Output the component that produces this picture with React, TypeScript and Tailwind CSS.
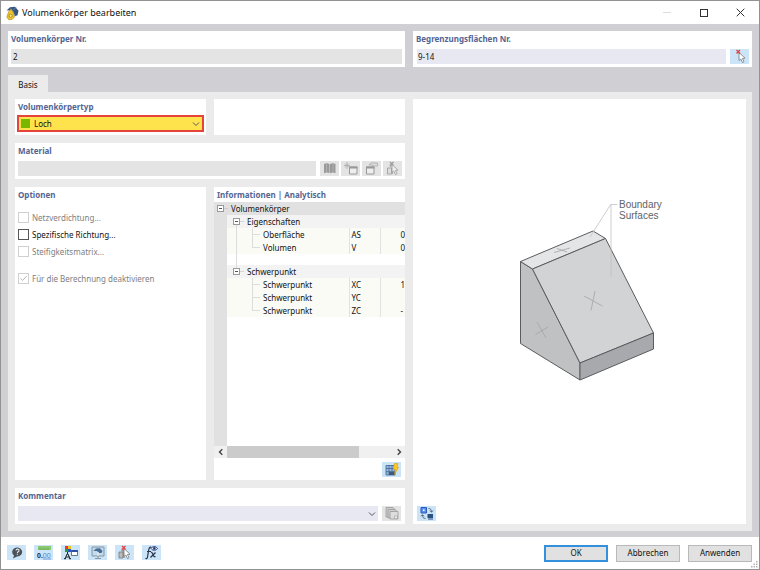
import { useState } from 'react';
import type { ReactNode } from 'react';

type PanelProps = { title?: string; htmlFor?: string; className?: string; children?: ReactNode };

const Panel = ({ title, htmlFor, className = '', children }: PanelProps) => (
    <section className={`bg-white min-w-0 min-h-[36px] flex flex-col ${className}`}>
        {title && (
            <h2 className="px-[3px] leading-[15px] mb-[3px] font-bold text-[#536592]">
                {htmlFor ? <label htmlFor={htmlFor}>{title}</label> : title}
            </h2>
        )}
        {children}
    </section>
);

type IconButtonProps = { label: string; disabled?: boolean; children: ReactNode };

const IconButton = ({ label, disabled, children }: IconButtonProps) => (
    <button
        type="button"
        aria-label={label}
        disabled={disabled}
        className="w-[19px] h-[15px] shrink-0 flex items-center justify-center bg-[#cce4f7] disabled:bg-[#e4e4e4]"
    >
        <svg viewBox="0 0 18 15" className="w-[18px] h-[15px]" fill="none">{children}</svg>
    </button>
);

const Chevron = () => (
    <svg viewBox="0 0 8 8" className="w-2 h-2 absolute right-0.5 top-1/2 -translate-y-1/2 pointer-events-none" fill="none" stroke="#55565f">
        <path d="m1 2.500 3 3 3-3" />
    </svg>
);

const Cursor = ({ fill = '#fff', stroke = '#777' }) => (
    <path d="M8 3.500v8l1.800-1.500 1.700 3.500 1.500-.8-1.600-3.200 2.600-.3z" fill={fill} stroke={stroke} strokeWidth=".8" />
);

type OptionProps = { label: string; disabled?: boolean; defaultChecked?: boolean };

const Option = ({ label, disabled, defaultChecked }: OptionProps) => (
    <label className={`flex items-center gap-[3px] h-[17px] ${disabled ? 'text-[#808080]' : 'text-[#111]'}`}>
        <span className="relative flex">
            <input
                type="checkbox"
                disabled={disabled}
                defaultChecked={defaultChecked}
                className="peer appearance-none w-[11px] h-[11px] bg-white border border-[#555] disabled:border-[#d0d0d0]"
            />
            <svg viewBox="0 0 11 11" className="absolute inset-0 hidden peer-checked:block pointer-events-none" fill="none" stroke="#b5b5b5">
                <path d="m2.500 5.500 2 2 4.200-4.500" />
            </svg>
        </span>
        {label}
    </label>
);

const Expander = () => (
    <button type="button" aria-label="Zuklappen" className="w-[7px] h-[7px] shrink-0 flex items-center justify-center bg-white border border-[#9a9a9a]">
        <span className="w-[3px] h-px bg-[#555]" />
    </button>
);

const Group = ({ name, more }: { name: string; more?: boolean }) => (
    <tr className="h-[13px] bg-[#f3f3f3]">
        <td className="bg-[#e1e1e1]" />
        <td colSpan={3} className="relative">
            {more && <span className="absolute left-[9px] top-2 h-[52px] w-px bg-[#ddd]" />}
            <span className="relative flex items-center pl-1.5 leading-3">
                <Expander />
                <span className="w-1 h-px bg-[#d5d5d5] mr-[3px]" />
                {name}
            </span>
        </td>
    </tr>
);

type ItemProps = { name: string; symbol: string; value: string; last?: boolean; more?: boolean };

const Item = ({ name, symbol, value, last, more }: ItemProps) => (
    <tr className="h-[13px] bg-[#fafbf5]">
        <td className="bg-[#e1e1e1]" />
        <td className="relative pl-9 border-r border-[#e2e2e2]">
            {more && <span className="absolute left-[9px] inset-y-0 w-px bg-[#ddd]" />}
            <span className={`absolute left-[25px] top-0 w-px bg-[#ddd] ${last ? 'h-[7px]' : 'h-full'}`} />
            <span className="absolute left-[25px] top-1.5 w-2 h-px bg-[#ddd]" />
            {name}
        </td>
        <td className="pl-0.5 border-r border-[#e2e2e2]">{symbol}</td>
        <td className="pl-5">{value}</td>
    </tr>
);

const InfoTable = () => (
    <div className="overflow-hidden flex-1 flex flex-col bg-[linear-gradient(to_right,#e1e1e1_13px,#fff_13px)]">
        <table className="w-[260px] table-fixed border-collapse leading-3 text-[#111]">
            <colgroup>
                <col className="w-[13px]" />
                <col className="w-[122px]" />
                <col className="w-[31px]" />
                <col />
            </colgroup>
            <tbody>
                <tr className="h-[13px] bg-[#e1e1e1]">
                    <td colSpan={4}>
                        <span className="flex items-center pl-[3px] leading-3">
                            <Expander />
                            <span className="w-1 h-px bg-[#ccc] mr-[3px]" />
                            Volumenkörper
                        </span>
                    </td>
                </tr>
                <Group name="Eigenschaften" more />
                <Item name="Oberfläche" symbol="AS" value="0" more />
                <Item name="Volumen" symbol="V" value="0" last more />
                <tr className="h-[11px]">
                    <td className="bg-[#e1e1e1]" />
                    <td colSpan={3} className="relative bg-white">
                        <span className="absolute left-[9px] inset-y-0 w-px bg-[#ddd]" />
                    </td>
                </tr>
                <Group name="Schwerpunkt" />
                <Item name="Schwerpunkt" symbol="XC" value="1" />
                <Item name="Schwerpunkt" symbol="YC" value="" />
                <Item name="Schwerpunkt" symbol="ZC" value="-" last />
            </tbody>
        </table>
    </div>
);

const ScrollBar = () => (
    <div className="flex h-3 bg-[#f0f0f0]">
        <button type="button" aria-label="Nach links" className="w-[13px] flex items-center justify-center">
            <svg viewBox="0 0 8 8" className="w-2 h-2" fill="none" stroke="#444" strokeWidth="1.4"><path d="M5.300 1.200 2.500 4l2.800 2.800" /></svg>
        </button>
        <div className="flex-1"><div className="w-4/5 h-full bg-[#cbcbcb]" /></div>
        <button type="button" aria-label="Nach rechts" className="w-[13px] flex items-center justify-center">
            <svg viewBox="0 0 8 8" className="w-2 h-2" fill="none" stroke="#444" strokeWidth="1.4"><path d="M2.700 1.200 5.500 4 2.700 6.800" /></svg>
        </button>
    </div>
);

const Preview = () => (
    <svg viewBox="-20 0 200 200" className="w-[200px] h-[200px]" strokeLinejoin="round" fill="none">
        <g stroke="#5b5c5f">
            <path d="m20.500 70.500 12 7.500L80 172v17l-59.500-36.500z" fill="#c0c1c3" />
            <path d="M20.500 70.500 93 40l12.500 7.500L32.500 78z" fill="#e3e5e7" />
            <path d="m32.500 78 73-30.500L153.500 142 80 172z" fill="#d2d3d5" />
            <path d="m80 172 73.500-30v16L80 189z" fill="#a8a9ad" />
        </g>
        <g stroke="#a3a4a6" strokeWidth=".8">
            <path d="m84 105 18.500 10M95 100l-4 19.500M37 131l9 16M35.500 143.500 48 136M54 61.500l16-4.500M57 57.500l10 3.500" />
        </g>
        <path d="M117.500 13.500h-6.800L90 46M111 13.500V86" stroke="#c2c2c2" strokeWidth=".8" />
        <g fill="#626366" fontSize="10" fontFamily="Liberation Sans, Arial, sans-serif">
            <text x="119" y="17">Boundary</text>
            <text x="119" y="28">Surfaces</text>
        </g>
    </svg>
);

const TitleBar = () => (
    <header className="flex items-center h-[23px] pl-[5px] bg-white">
        <svg viewBox="0 0 13 14" className="w-[13px] h-[14px] mr-[3px]">
            <path d="M.5 4.500 4 1.200 9 .8l3.500 4-1 4.500-2.500 1-2-5-3-1z" fill="#35557c" />
            <path d="m4 1.500 2.500 3 4-3.300M6.500 4.500 9 10" stroke="#6f92b8" strokeWidth=".7" fill="none" />
            <path d="M2 7.500 3.500 4l2-.5 2 4 1 3.500-2.500 2.500H2.500L.8 11z" fill="#f0c42c" stroke="#a8871f" strokeWidth=".6" />
            <circle cx="4.600" cy="9.800" r="1.600" fill="#fbe685" stroke="#94781f" strokeWidth=".7" />
        </svg>
        <h1 className="text-[9px] text-[#111]">Volumenkörper bearbeiten</h1>
        <div className="ml-auto flex h-full">
            <button type="button" aria-label="Minimieren" disabled className="w-[37px] flex items-center justify-center">
                <span className="w-2 h-px bg-[#ddd]" />
            </button>
            <button type="button" aria-label="Maximieren" className="w-[37px] flex items-center justify-center">
                <span className="w-2 h-2 border border-[#333]" />
            </button>
            <button type="button" aria-label="Schließen" className="w-[37px] flex items-center justify-center">
                <svg viewBox="0 0 9 9" className="w-[9px] h-[9px]" stroke="#333"><path d="m.7.7 7.600 7.600M8.300.7.7 8.300" /></svg>
            </button>
        </div>
    </header>
);

const Footer = () => (
    <footer className="flex items-center h-8 pl-1.5 pr-[7px] bg-white relative">
        <div className="flex gap-2 -mt-0.5">
            <IconButton label="Hilfe">
                <path d="m5 13.500 1-3A5 4.500 0 1 1 9 11.500z" fill="#4c5257" />
                <path d="M8 5.500c.2-1.800 3.200-1.700 3 .2-.1 1.100-1.600 1.100-1.600 2.200m0 .8v1" stroke="#dce8f0" strokeWidth="1.200" />
            </IconButton>
            <IconButton label="Einheiten">
                <path d="M3 1h13v4H3z" fill="#8bc970" />
                <path d="M5 3v2M7 3.500V5M9 3v2m2-1.500V5m2-2v2" stroke="#559542" strokeWidth=".6" />
                <text x="2" y="12.500" fontSize="7" fontWeight="700" fill="#222" fontFamily="Liberation Sans, sans-serif">0.<tspan fill="#4a80d0" fontWeight="400">00</tspan></text>
                <path d="M8 14h8" stroke="#4a80d0" strokeWidth=".7" />
            </IconButton>
            <IconButton label="Darstellung">
                <path d="M3 1h3v3H3z" fill="#e33" /><path d="M6 1h3v3H6z" fill="#edc619" />
                <path d="M3 4h3v3H3z" fill="#2b9b39" /><path d="M6 4h3v3H6z" fill="#2854c8" />
                <path d="M5.500 7v2M3 14l2-5h1l2 5M4 12h3.500M2 13.700h2M7 13.700h2" stroke="#222" strokeWidth="1" />
                <path d="M9.500 5.500h6v5h-6z" fill="#fff" stroke="#345" strokeWidth=".7" /><path d="M9.300 5h6.500v2H9.300z" fill="#334e9c" />
            </IconButton>
            <IconButton label="Ansicht">
                <path d="M3 2h12v9H3zM9 11v2M6 13.500h6" stroke="#8796a3" fill="#c2dbed" />
                <path d="m4.500 6 2.500-2.500 4-.3L13.500 6l-1 2H10L8 6z" fill="#486d96" /><path d="M9 7v4" stroke="#e8f2fa" />
            </IconButton>
            <IconButton label="Auswahl">
                <path d="M3 7h4v6H3zM5 5h3v8" fill="#bbb" stroke="#777" strokeWidth=".8" />
                <Cursor />
                <path d="m6 1 3.500 3.500m0-3.500-3.500 3.500" stroke="#e34040" strokeWidth="1.300" />
            </IconButton>
            <IconButton label="Formel">
                <path d="M8.500 2.500c-2-1-2.500 1-2.800 2.500L4.500 12c-.3 1.500-1 2-2 1.300M4 6.500h4" stroke="#273449" strokeWidth="1.200" />
                <path d="M8 7.500c2-1 2 5.500 4.500 4M12.500 7.500 7.500 12.500" stroke="#273449" strokeWidth="1.200" />
                <path d="M8 3.500c1.800-2.600 4.700-2.600 6.500 0-1.800 2.400-4.700 2.400-6.500 0z" fill="#dfe8fa" stroke="#293e75" /><circle cx="11.300" cy="3.400" r="1.300" fill="#293e75" />
            </IconButton>
        </div>
        <div className="ml-auto flex gap-2 text-[#111]">
            <button type="button" className="w-16 h-[17px] bg-[#e1e1e1] border-2 border-[#3290dc]">OK</button>
            <button type="button" className="w-16 h-[17px] bg-[#e1e1e1] border border-[#b9b9b9]">Abbrechen</button>
            <button type="button" className="w-16 h-[17px] bg-[#e1e1e1] border border-[#b9b9b9]">Anwenden</button>
        </div>
        <svg viewBox="0 0 7 7" className="absolute right-px bottom-px w-[7px] h-[7px]" fill="#b3b3b3">
            <path d="M5 0h1.500v1.500H5zM5 2.500h1.500V4H5zM5 5h1.500v1.500H5zM2.500 2.500H4V4H2.500zM2.500 5H4v1.500H2.500zM0 5h1.500v1.500H0z" />
        </svg>
    </footer>
);

const App = () => {
    const [surfaces, setSurfaces] = useState('9-14');
    const [comment, setComment] = useState('');

    return (
        <div className="min-h-screen flex flex-col border border-[#929292] bg-[#d0cfd4] text-[8px] font-['Noto_Sans','Open_Sans',sans-serif]">
            <TitleBar />
            <main className="flex-1 flex flex-col px-[7px] pt-[7px] pb-1.5">
                <div className="grid grid-cols-[397fr_339fr] gap-2 mb-2">
                    <Panel title="Volumenkörper Nr." htmlFor="solid-no">
                        <input id="solid-no" readOnly value="2" className="mx-[3px] px-0.5 h-[15px] min-w-0 bg-[#e4e4e4] text-[#111]" />
                    </Panel>
                    <Panel title="Begrenzungsflächen Nr." htmlFor="surfaces">
                        <div className="flex gap-1 pl-1 pr-[3px]">
                            <input id="surfaces" value={surfaces} onChange={(e) => setSurfaces(e.target.value)} className="flex-1 min-w-0 px-px h-[15px] bg-[#e8e8f3] text-[#111]" />
                            <IconButton label="Flächen auswählen">
                                <Cursor />
                                <path d="m5.500 1 3.500 3.500m0-3.500-3.500 3.500" stroke="#e34040" strokeWidth="1.300" />
                            </IconButton>
                        </div>
                    </Panel>
                </div>

                <nav className="flex" role="tablist">
                    <button type="button" role="tab" aria-selected="true" className="h-[17px] w-10 pt-0.5 bg-[#ebebeb] text-[#111]">Basis</button>
                </nav>

                <div role="tabpanel" className="flex-1 grid grid-cols-[390fr_333fr] gap-2 py-[7px] pl-[7px] pr-1.5 bg-[#ebebeb]">
                    <div className="min-w-0 flex flex-col gap-2">
                        <div className="grid grid-cols-2 gap-2">
                            <Panel title="Volumenkörpertyp" htmlFor="solid-type">
                                <div className="relative mx-0.5 -mt-0.5 mb-[3px] flex items-center h-[17px] border-2 border-[#e5433b] bg-[#ffe34d]">
                                    <span className="w-[9px] h-[9px] ml-0.5 bg-[#7ab800]" />
                                    <select id="solid-type" className="flex-1 h-full appearance-none pl-1 text-[#111]">
                                        <option>Loch</option>
                                    </select>
                                    <Chevron />
                                </div>
                            </Panel>
                            <Panel />
                        </div>

                        <Panel title="Material" htmlFor="material">
                            <div className="flex gap-0.5 px-[3px]">
                                <select id="material" disabled className="flex-1 min-w-0 h-[15px] mr-0.5 appearance-none bg-[#e4e4e4]" />
                                <IconButton label="Bibliothek" disabled>
                                    <path d="M3 3c2-1 4-1 5.500.3v9C7 11.300 5 11.300 3 12.300zM14.500 3c-2-1-4-1-5.500.3v9c1.500-1 3.500-1 5.500 0z" fill="#999" />
                                    <path d="M5.500 2.500v9m6.500-9v9" stroke="#bbb" strokeWidth=".7" />
                                </IconButton>
                                <IconButton label="Neu" disabled>
                                    <path d="M7.500 6h7.500v7H7.500z" fill="#eee" stroke="#999" /><path d="M7 5.500h8.500v2H7z" fill="#999" />
                                    <path d="M5 1v7M2 4.500h6M3 2.500l4 4m0-4-4 4" stroke="#aaa" strokeWidth=".8" />
                                </IconButton>
                                <IconButton label="Bearbeiten" disabled>
                                    <path d="M3.500 6H11v7H3.500z" fill="#eee" stroke="#999" /><path d="M3 5.500h8.500v2H3z" fill="#999" />
                                    <path d="M6 4c1-2 3-2.500 5-2h3.500v3h-3L9 4z" fill="#ddd" stroke="#aaa" strokeWidth=".8" />
                                </IconButton>
                                <IconButton label="Material auswählen" disabled>
                                    <path d="M3.500 7h4v6h-4zM5.500 5h3v8" fill="#ddd" stroke="#999" strokeWidth=".8" />
                                    <path d="m6 1 3.500 3.500M9.500 1 6 4.500" stroke="#999" strokeWidth="1.200" />
                                    <Cursor fill="#eee" stroke="#999" />
                                </IconButton>
                            </div>
                        </Panel>

                        <div className="flex-1 grid grid-cols-2 gap-2">
                            <Panel title="Optionen">
                                <div className="px-[3px] pt-1 flex flex-col">
                                    <Option label="Netzverdichtung..." disabled />
                                    <Option label="Spezifische Richtung..." />
                                    <Option label="Steifigkeitsmatrix..." disabled />
                                    <div className="mt-2.5">
                                        <Option label="Für die Berechnung deaktivieren" disabled defaultChecked />
                                    </div>
                                </div>
                            </Panel>
                            <Panel title="Informationen | Analytisch">
                                <div className="flex-1 flex flex-col -mt-[3px]">
                                    <InfoTable />
                                    <ScrollBar />
                                    <div className="flex justify-end pt-1 pb-[3px] pr-1">
                                        <IconButton label="Neu berechnen">
                                            <path d="M3 3.500h9V13H3z" fill="#99b9dc" stroke="#3e638f" strokeWidth=".8" />
                                            <path d="M6 9.700h6V13H6z" fill="#35587f" /><path d="M6 3.500V13M9 3.500V13M3 6.500h9M3 9.700h9" stroke="#426994" strokeWidth=".8" />
                                            <path d="M11.500 1.500H15l-1 4h1.500l-4 7 .8-5h-2z" fill="#ffc91f" stroke="#d89a18" strokeWidth=".6" />
                                        </IconButton>
                                    </div>
                                </div>
                            </Panel>
                        </div>

                        <Panel title="Kommentar" htmlFor="comment">
                            <div className="flex gap-1 pl-[3px] pr-1">
                                <div className="relative flex-1 flex">
                                    <input id="comment" value={comment} onChange={(e) => setComment(e.target.value)} className="flex-1 min-w-0 px-0.5 h-[15px] bg-[#e8e8f3]" />
                                    <Chevron />
                                </div>
                                <IconButton label="Kommentare" disabled>
                                    <path d="M3 1.500h7l2 2V11H3z" fill="#ccc" stroke="#999" strokeWidth=".8" />
                                    <path d="M5 3.500h7l2 2v6.500H5z" fill="#ccc" stroke="#999" strokeWidth=".8" />
                                    <path d="M7 5.500h8V13H7z" fill="#ddd" stroke="#999" strokeWidth=".8" /><path d="M11.500 10h3v2.500h-3z" fill="#eee" stroke="#999" strokeWidth=".6" />
                                </IconButton>
                            </div>
                        </Panel>
                    </div>

                    <section aria-label="Vorschau" className="bg-white min-w-0 flex flex-col">
                        <div className="flex-1 flex items-center justify-center pb-6">
                            <Preview />
                        </div>
                        <div className="pl-1 pb-[3px]">
                            <IconButton label="Ansicht wechseln">
                                <path d="M3 1.500h5.500V7H3z" fill="#5d8fe8" stroke="#2a5bc3" /><path d="M5 3.500h1.500V5H5z" fill="#fff" />
                                <path d="M9.500 8h5.500v4H9.500z" fill="#2b5181" /><path d="M10 13h5" stroke="#2b5181" />
                                <path d="M10.500 2.500c2 0 3 1 3 3.500M12 4.500l1.500 1.800L15 4.500M7.500 12.500c-2 0-3-1-3-3.500M3 10.300l1.500-1.600L6 10.300" stroke="#4f5d69" strokeWidth=".9" />
                            </IconButton>
                        </div>
                    </section>
                </div>
            </main>
            <Footer />
        </div>
    );
};

export default App;
